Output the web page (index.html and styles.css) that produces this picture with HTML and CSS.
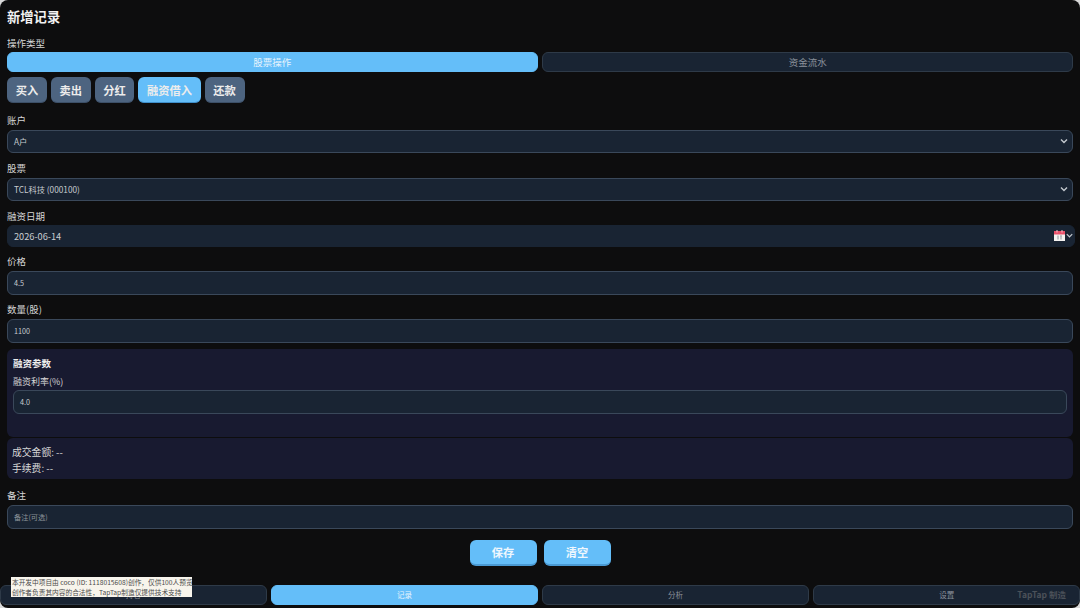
FILE: index.html
```html
<!DOCTYPE html>
<html lang="zh-CN">
<head>
    <meta charset="UTF-8">
    <meta name="viewport" content="width=device-width, initial-scale=1.0">
    <title>新增记录</title>
    <link rel="stylesheet" href="styles.css">
</head>
<body>
    <div class="app">
        <h1 class="title">新增记录</h1>

        <div class="label label-first">操作类型</div>
        <div class="tabs">
            <button class="tab active">股票操作</button>
            <button class="tab">资金流水</button>
        </div>
        <div class="actions">
            <button class="action">买入</button>
            <button class="action">卖出</button>
            <button class="action">分红</button>
            <button class="action active">融资借入</button>
            <button class="action">还款</button>
        </div>

        <div class="label label-account">账户</div>
        <div class="field select">
            <span>A户</span>
            <svg class="chevron" viewBox="0 0 10 10"><path d="M2 3.5 5 6.5 8 3.5" /></svg>
        </div>

        <div class="label">股票</div>
        <div class="field select">
            <span>TCL科技 (000100)</span>
            <svg class="chevron" viewBox="0 0 10 10"><path d="M2 3.5 5 6.5 8 3.5" /></svg>
        </div>

        <div class="label label-date">融资日期</div>
        <div class="field date">
            <span>2026-06-14</span>
            <svg class="calendar" viewBox="0 0 11 11">
                <rect x="0" y="1" width="11" height="10" fill="#f4f2f0" />
                <rect x="0" y="1" width="11" height="3.5" fill="#e8506a" />
                <rect x="2.5" y="0" width="1" height="2.5" fill="#f4c8d0" />
                <rect x="7.5" y="0" width="1" height="2.5" fill="#f4c8d0" />
                <rect x="3.5" y="5.5" width="1" height="4" fill="#8f949c" />
                <rect x="6" y="5.5" width="2" height="1" fill="#8f949c" />
                <rect x="6.5" y="6.5" width="1" height="3" fill="#8f949c" />
            </svg>
            <svg class="chevron chevron-date" viewBox="0 0 10 10"><path d="M2 3.5 5 6.5 8 3.5" /></svg>
        </div>

        <div class="label">价格</div>
        <div class="field small-text">4.5</div>

        <div class="label">数量(股)</div>
        <div class="field small-text">1100</div>

        <div class="panel params">
            <div class="panel-title">融资参数</div>
            <div class="label label-rate">融资利率(%)</div>
            <div class="field small-text">4.0</div>
        </div>

        <div class="panel summary">
            <div>成交金额: --</div>
            <div>手续费: --</div>
        </div>

        <div class="label label-note">备注</div>
        <div class="field small-text placeholder">备注(可选)</div>

        <div class="buttons">
            <button class="primary">保存</button>
            <button class="primary">清空</button>
        </div>

        <nav class="nav">
            <button class="nav-item">持仓</button>
            <button class="nav-item active">记录</button>
            <button class="nav-item">分析</button>
            <button class="nav-item">设置</button>
        </nav>
    </div>

    <div class="notice">本开发中项目由 coco (ID: 1118015608)创作，仅供100人预览<br>创作者负责其内容的合法性，TapTap制造仅提供技术支持</div>
    <div class="watermark">TapTap 制造</div>
</body>
</html>
```

FILE: styles.css
```css
* {
    box-sizing: border-box;
}

html, body {
    margin: 0;
    height: 608px;
    overflow: hidden;
    background: #d8d8d8;
}

body {
    font-family: "Noto Sans CJK SC", "Noto Sans", sans-serif;
    color: #e6e6e6;
    position: relative;
}

.app {
    width: 1080px;
    height: 608px;
    padding: 0 7px;
    background: #0d0d0e;
    border-radius: 8px;
    display: flex;
    flex-direction: column;
}

button {
    font-family: inherit;
    cursor: pointer;
}

.title {
    margin: 7px 0 0;
    font-size: 13.3px;
    line-height: 19px;
    font-weight: 700;
    color: #f2f2f2;
}

.label {
    flex: none;
    font-size: 9.5px;
    line-height: 14px;
    height: 14px;
    margin-top: 7.5px;
    margin-bottom: 3px;
    color: #d6d6d6;
}

.label-first {
    margin-top: 9.5px;
    margin-bottom: 2.8px;
}

.label-account {
    margin-top: 10px;
    margin-bottom: 2.2px;
}

.label-date {
    margin-bottom: 2px;
}

.tabs {
    display: flex;
    gap: 4.6px;
}

.tab {
    flex: 1;
    height: 19.7px;
    padding: 0;
    font-size: 9.5px;
    line-height: 17px;
    color: #8b929c;
    background: #192433;
    border: 1px solid #2e3a48;
    border-radius: 6px;
}

.tab.active {
    color: #e8f4fd;
    background: #64bef9;
    border-color: #64bef9;
}

.actions {
    display: flex;
    gap: 3.9px;
    margin-top: 5px;
}

.action {
    height: 26.4px;
    padding: 0 8.7px;
    font-size: 11.25px;
    font-weight: 700;
    color: #ececec;
    background: #4d6480;
    border: none;
    border-bottom: 1px solid #3c4f67;
    border-radius: 6px;
}

.action.active {
    background: #64bef9;
    border-bottom-color: #3f8fca;
}

.field {
    height: 23.5px;
    flex: none;
    display: flex;
    align-items: center;
    padding: 0 6px;
    font-size: 8.25px;
    color: #c8ccd0;
    background: #192433;
    border: 1px solid #3a485a;
    border-radius: 6px;
}

.select {
    justify-content: space-between;
    padding-right: 3px;
}

.chevron {
    width: 10px;
    height: 10px;
    fill: none;
    stroke: #c3c8ce;
    stroke-width: 1.4;
}

.date {
    height: 22px;
    margin-right: -1.5px;
    font-size: 9.2px;
    border-color: #192433;
    padding-right: 0;
}

.date span {
    flex: 1;
}

.calendar {
    width: 11px;
    height: 11px;
}

.chevron-date {
    width: 9px;
    height: 9px;
}

.small-text {
    font-size: 7.2px;
}

.placeholder {
    color: #8e949b;
}

.panel {
    background: #181a30;
    border-radius: 6px;
    flex: none;
}

.params {
    height: 88.5px;
    margin-top: 6px;
    padding: 7.5px 6px;
}

.panel-title {
    font-size: 9.5px;
    line-height: 14px;
    font-weight: 700;
    color: #eeeeee;
}

.label-rate {
    margin-top: 5px;
    margin-bottom: 1px;
    font-size: 9px;
}

.summary {
    height: 41px;
    margin-top: 1px;
    padding: 5.5px 5px;
    font-size: 9.8px;
    line-height: 16px;
    color: #d6d6d6;
}

.label-note {
    margin-top: 9px;
    margin-bottom: 3px;
}

.buttons {
    display: flex;
    justify-content: center;
    gap: 7px;
    margin-top: 11px;
}

.primary {
    width: 67px;
    height: 26.5px;
    padding: 0;
    font-size: 11.25px;
    font-weight: 700;
    color: #eef7fe;
    background: #64bef9;
    border: none;
    border-bottom: 2px solid #4a9ad4;
    border-radius: 6px;
}

.nav {
    display: flex;
    gap: 4.6px;
    margin: auto -7px 3.3px;
}

.nav-item {
    flex: 1;
    height: 19.7px;
    padding: 0;
    font-size: 7.5px;
    color: #8b929c;
    background: #192433;
    border: 1px solid #2e3a48;
    border-radius: 6px;
}

.nav-item.active {
    color: #e8f4fd;
    background: #64bef9;
    border-color: #64bef9;
}

.notice {
    position: absolute;
    left: 11px;
    top: 577px;
    width: 181px;
    height: 20px;
    padding-left: 1px;
    font-size: 6.7px;
    line-height: 10px;
    white-space: nowrap;
    overflow: hidden;
    color: #4a4a4a;
    background: #f7f4ec;
}

.watermark {
    position: absolute;
    right: 14px;
    top: 588px;
    font-family: "Noto Sans CJK SC", sans-serif;
    font-size: 8.5px;
    line-height: 13px;
    font-weight: 700;
    color: #4b5159;
}
```
